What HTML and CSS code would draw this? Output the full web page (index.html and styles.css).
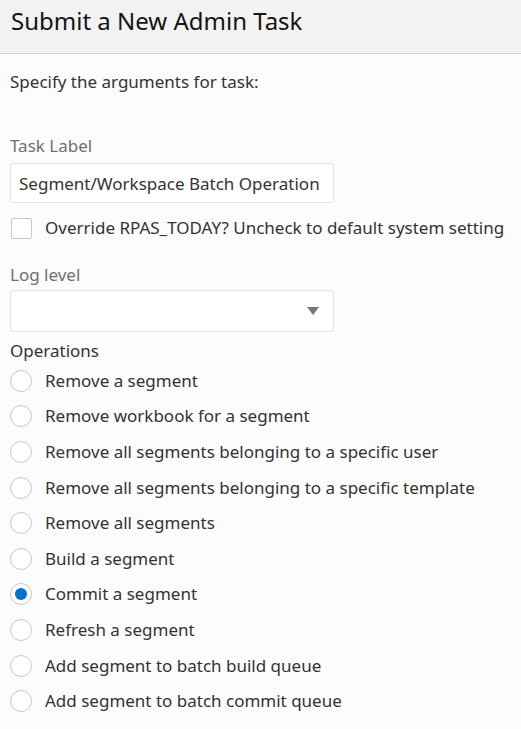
FILE: index.html
```html
<!DOCTYPE html>
<html lang="en">
<head>
    <meta charset="UTF-8">
    <meta name="viewport" content="width=device-width, initial-scale=1.0">
    <title>Submit a New Admin Task</title>
    <link rel="stylesheet" href="styles.css">
</head>
<body>

    <div class="dialog-header">
        <h1>Submit a New Admin Task</h1>
    </div>

    <!-- Arguments for the admin task -->
    <form class="task-form">
        <p class="intro">Specify the arguments for task:</p>

        <label class="field-label" for="task_label">Task Label</label>
        <input class="text-input" type="text" id="task_label" value="Segment/Workspace Batch Operation">

        <label class="check-row">
            <span class="check-box"></span>
            <span>Override RPAS_TODAY? Uncheck to default system setting</span>
        </label>

        <label class="field-label log-label" for="log_level">Log level</label>
        <div class="select-box" id="log_level">
            <span class="select-arrow"></span>
        </div>

        <div class="group-label">Operations</div>
        <div class="radio-list">
            <label class="radio-row"><span class="radio"></span>Remove a segment</label>
            <label class="radio-row"><span class="radio"></span>Remove workbook for a segment</label>
            <label class="radio-row"><span class="radio"></span>Remove all segments belonging to a specific user</label>
            <label class="radio-row"><span class="radio"></span>Remove all segments belonging to a specific template</label>
            <label class="radio-row"><span class="radio"></span>Remove all segments</label>
            <label class="radio-row"><span class="radio"></span>Build a segment</label>
            <label class="radio-row"><span class="radio checked"></span>Commit a segment</label>
            <label class="radio-row"><span class="radio"></span>Refresh a segment</label>
            <label class="radio-row"><span class="radio"></span>Add segment to batch build queue</label>
            <label class="radio-row"><span class="radio"></span>Add segment to batch commit queue</label>
        </div>
    </form>

</body>
</html>
```

FILE: styles.css
```css
body {
    margin: 0;
    font-family: "Noto Sans", "Open Sans", sans-serif;
    font-size: 17px;
    line-height: 24px;
    color: #333;
    background-color: #fcfcfc;
}

.dialog-header {
    height: 53px;
    box-sizing: content-box;
    background-color: #f2f2f2;
    border-bottom: 1px solid #d6d6d6;
    padding: 0 11px;
}

.dialog-header h1 {
    margin: 0;
    padding-top: 4px;
    font-size: 24px;
    line-height: 34px;
    font-weight: normal;
    color: #161513;
}

.task-form {
    padding: 0 10px;
    display: flex;
    flex-direction: column;
    align-items: flex-start;
}

.intro {
    margin: 16px 0 0;
}

.field-label {
    margin-top: 40px;
    color: #6f6f6f;
}

.text-input {
    margin-top: 5px;
    width: 324px;
    height: 40px;
    box-sizing: border-box;
    padding: 0 8px;
    font: inherit;
    color: #333;
    background: #fff;
    border: 1px solid #e4e4e4;
    border-radius: 3px;
}

.check-row {
    margin-top: 13px;
    display: flex;
    align-items: center;
    gap: 13px;
}

.check-box {
    width: 21px;
    height: 21px;
    box-sizing: border-box;
    margin-left: 1px;
    border: 1px solid #c8c8c8;
    border-radius: 2px;
    background: #fff;
}

.log-label {
    margin-top: 23px;
}

.select-box {
    margin-top: 3px;
    width: 324px;
    height: 42px;
    box-sizing: border-box;
    background: #fff;
    border: 1px solid #e4e4e4;
    border-radius: 3px;
    display: flex;
    align-items: center;
    justify-content: flex-end;
    padding-right: 14px;
}

.select-arrow {
    width: 0;
    height: 0;
    border-left: 6px solid transparent;
    border-right: 6px solid transparent;
    border-top: 8px solid #777;
}

.group-label {
    margin-top: 7px;
    color: #333;
}

.radio-list {
    display: flex;
    flex-direction: column;
}

.radio-row {
    display: flex;
    align-items: center;
    gap: 13px;
    height: 35.6px;
}

.radio {
    width: 22px;
    height: 22px;
    box-sizing: border-box;
    border: 1px solid #c8c8c8;
    border-radius: 50%;
    background: #fff;
    display: flex;
    align-items: center;
    justify-content: center;
}

.radio.checked::after {
    content: "";
    width: 12px;
    height: 12px;
    border-radius: 50%;
    background: #0572ce;
}
```
